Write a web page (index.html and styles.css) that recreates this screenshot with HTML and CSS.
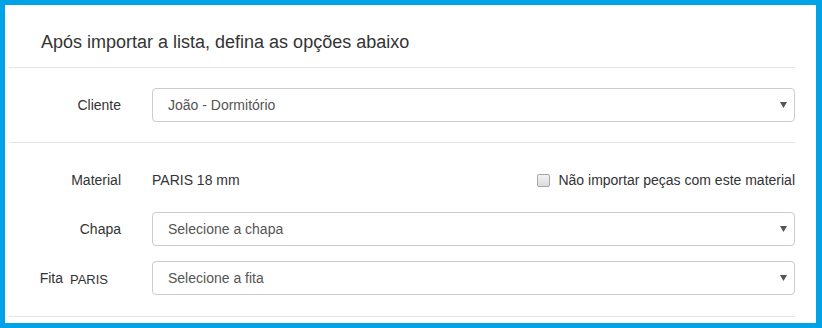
FILE: index.html
```html
<!DOCTYPE html>
<html lang="pt-BR">

<head>
<meta charset="UTF-8">
<meta name="viewport" content="width=device-width, initial-scale=1.0">
<title>Importar lista</title>
<link rel="stylesheet" href="styles.css">
</head>

<body>

<div class="frame">
  <div class="panel">
    <div class="panel-header">
      <h4 class="panel-title">Após importar a lista, defina as opções abaixo</h4>
    </div>

    <div class="panel-section">
      <div class="form-row">
        <label class="row-label" for="cliente">Cliente</label>
        <div class="select-wrap">
          <select id="cliente" class="form-select">
            <option>João - Dormitório</option>
          </select>
          <svg class="caret" width="7" height="6" viewBox="0 0 7 6"><path d="M0 0H7L3.5 6Z" fill="#555"/></svg>
        </div>
      </div>
    </div>

    <div class="panel-section last">
      <div class="form-row">
        <span class="row-label">Material</span>
        <div class="static-row">
          <span>PARIS 18 mm</span>
          <label class="check"><input type="checkbox"> Não importar peças com este material</label>
        </div>
      </div>

      <div class="form-row">
        <label class="row-label" for="chapa">Chapa</label>
        <div class="select-wrap">
          <select id="chapa" class="form-select">
            <option>Selecione a chapa</option>
          </select>
          <svg class="caret" width="7" height="6" viewBox="0 0 7 6"><path d="M0 0H7L3.5 6Z" fill="#555"/></svg>
        </div>
      </div>

      <div class="form-row">
        <label class="row-label row-label-fita" for="fita">Fita <small>PARIS</small></label>
        <div class="select-wrap">
          <select id="fita" class="form-select">
            <option>Selecione a fita</option>
          </select>
          <svg class="caret" width="7" height="6" viewBox="0 0 7 6"><path d="M0 0H7L3.5 6Z" fill="#555"/></svg>
        </div>
      </div>
    </div>
  </div>
</div>

</body>
</html>
```

FILE: styles.css
```css
* { box-sizing: border-box; }
body { margin: 0; font-family: "Liberation Sans", Arial, sans-serif; font-size: 14px; line-height: 20px; color: #333; }

.frame { width: 822px; height: 328px; border: 5px solid #00a2e8; border-right-width: 6px; background: #fff; }
.panel { margin: 0 21px 0 4px; }

.panel-header { padding: 24px 32px 12px; border-bottom: 1px solid #e5e5e5; }
.panel-title { margin: 0; font-size: 18px; font-weight: normal; line-height: 26px; color: #333; }

.panel-section { padding: 20px 0; border-bottom: 1px solid #e5e5e5; }

.form-row { display: grid; grid-template-columns: 143px 1fr; margin-bottom: 15px; }
.form-row:last-child { margin-bottom: 0; }

.row-label { padding: 7px 31px 7px 0; text-align: right; color: #333; }
.row-label-fita { padding-right: 44px; }
.row-label small { font-size: 13px; margin-left: 3px; position: relative; top: 1px; }

.select-wrap { position: relative; }
.form-select {
    display: block; width: 100%; height: 34px; padding: 0 30px 0 15px;
    font-family: inherit; font-size: 14px; color: #555; background: #fff;
    border: 1px solid #ccc; border-radius: 4px; appearance: none; -webkit-appearance: none;
}
.caret { position: absolute; right: 8px; top: 14px; pointer-events: none; }

.static-row { display: flex; justify-content: space-between; align-items: center; padding: 7px 0; color: #333; }
.check { display: flex; align-items: center; gap: 8px; }
.check input {
    appearance: none; -webkit-appearance: none; margin: 0; width: 13px; height: 13px;
    border: 1px solid #a6a6a6; border-radius: 2px; background: linear-gradient(#f2f2f2, #dcdcdc);
}
```
